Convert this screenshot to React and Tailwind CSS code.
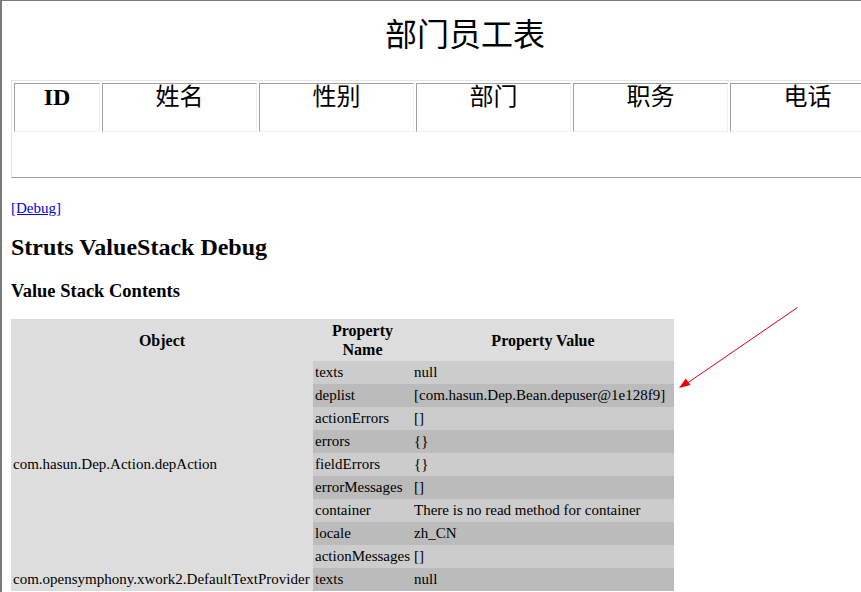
// 部门员工表 + Struts ValueStack Debug page
const serif = { fontFamily: '"Liberation Serif", "Noto Sans CJK SC", serif' };

const COLS = [
  { label: 'ID', w: 'w-[86px]', bold: true },
  { label: '姓名', w: 'w-[155px]' },
  { label: '性别', w: 'w-[155px]' },
  { label: '部门', w: 'w-[155px]' },
  { label: '职务', w: 'w-[155px]' },
  { label: '电话', w: 'w-[155px]' },
];

const DEP_ACTION = [
  ['texts', 'null'],
  ['deplist', '[com.hasun.Dep.Bean.depuser@1e128f9]'],
  ['actionErrors', '[]'],
  ['errors', '{}'],
  ['fieldErrors', '{}'],
  ['errorMessages', '[]'],
  ['container', 'There is no read method for container'],
  ['locale', 'zh_CN'],
  ['actionMessages', '[]'],
];

function rowBg(i) {
  return i % 2 === 0 ? 'bg-[#cccccc]' : 'bg-[#bbbbbb]';
}

export default function App() {
  return (
    <div
      className="relative h-screen w-full overflow-hidden bg-white border-t border-l-2 border-[#7a7a7a] text-black"
      style={serif}
    >
      <div className="w-[908px] ml-[9px]">
        {/* ── 标题 ── */}
        <div className="pt-[18px] text-center text-[32px] leading-[32px]">部门员工表</div>

        {/* ── 员工表 ── */}
        <div className="mt-[29px] w-[877px] border border-t-[#e6e6e6] border-l-[#e6e6e6] border-b-[#a0a0a0] border-r-[#a0a0a0] p-[2px]">
          <div className="flex gap-[2px]">
            {COLS.map(c => (
              <div
                key={c.label}
                className={`${c.w} h-[49px] border border-t-[#a0a0a0] border-l-[#a0a0a0] border-b-[#f0f0f0] border-r-[#f0f0f0] text-center text-[24px] leading-[26px] ${c.bold ? 'font-bold' : 'font-normal'}`}
              >
                {c.label}
              </div>
            ))}
          </div>
          <div className="mt-[2px] h-[41px]" />
        </div>

        {/* ── Debug ── */}
        <div className="mt-[21px] text-[15px] leading-[19px]">
          <a href="#" className="text-[#0000ee] underline">[Debug]</a>
        </div>
        <h2 className="mt-[15px] text-[24px] leading-[28px] font-bold">Struts ValueStack Debug</h2>
        <h3 className="mt-[19px] text-[18.5px] leading-[22px] font-bold">Value Stack Contents</h3>

        <table className="mt-[17px] table-fixed w-[663px] border-collapse text-[15px] leading-[19px]">
          <thead>
            <tr className="bg-[#dddddd]">
              <th className="w-[302px] p-[2px] text-[16px] font-bold text-center">Object</th>
              <th className="w-[99px] p-[2px] text-[16px] font-bold text-center">Property Name</th>
              <th className="w-[262px] p-[2px] text-[16px] font-bold text-center">Property Value</th>
            </tr>
          </thead>
          <tbody>
            {DEP_ACTION.map(([k, v], i) => (
              <tr key={k}>
                {i === 0 && (
                  <td rowSpan={DEP_ACTION.length} className="bg-[#dddddd] p-[2px] align-middle whitespace-nowrap">
                    com.hasun.Dep.Action.depAction
                  </td>
                )}
                <td className={`${rowBg(i)} p-[2px] whitespace-nowrap`}>{k}</td>
                <td className={`${rowBg(i)} p-[2px] whitespace-nowrap`}>{v}</td>
              </tr>
            ))}
            <tr>
              <td className="bg-[#dddddd] p-[2px] whitespace-nowrap">com.opensymphony.xwork2.DefaultTextProvider</td>
              <td className={`${rowBg(DEP_ACTION.length)} p-[2px] whitespace-nowrap`}>texts</td>
              <td className={`${rowBg(DEP_ACTION.length)} p-[2px] whitespace-nowrap`}>null</td>
            </tr>
          </tbody>
        </table>
      </div>

      {/* 红色箭头标注 */}
      <svg className="absolute left-0 top-0 pointer-events-none" width="861" height="592">
        <line x1="795.5" y1="306.5" x2="684" y2="383" stroke="#d00010" strokeWidth="1" />
        <polygon points="677,387 688.4,384.1 683.8,377.5" fill="#ee0000" />
      </svg>
    </div>
  );
}
